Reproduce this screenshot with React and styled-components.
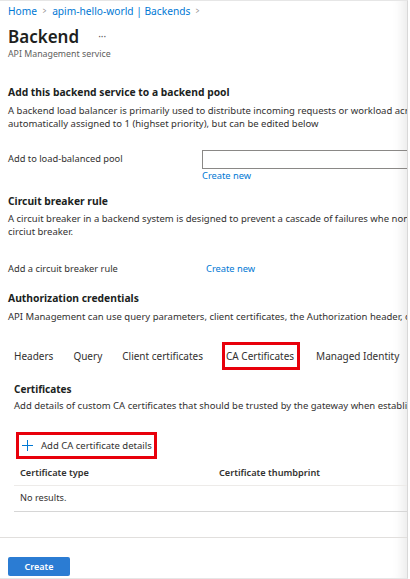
import React from "react";
import styled, { createGlobalStyle } from "styled-components";

const Global = createGlobalStyle`
  html, body {
    margin: 0;
    padding: 0;
    background: #ffffff;
  }
  body {
    font-family: "Noto Sans", "Open Sans", sans-serif;
    color: #323130;
  }
`;

const tabs = ["Headers", "Query", "Client certificates", "CA Certificates", "Managed Identity"];

const App = () => {
  return (
    <Page>
      <Global />
      <Main>
        <Breadcrumb>
          <Crumb>Home</Crumb>
          <Chevron>&gt;</Chevron>
          <Crumb>apim-hello-world | Backends</Crumb>
          <Chevron>&gt;</Chevron>
        </Breadcrumb>
        <TitleRow>
          <Title>Backend</Title>
          <More>···</More>
        </TitleRow>
        <Subtitle>API Management service</Subtitle>

        <Heading top={25}>Add this backend service to a backend pool</Heading>
        <Desc top={5}>
          A backend load balancer is primarily used to distribute incoming requests or workload across
          <br />
          automatically assigned to 1 (highset priority), but can be edited below
        </Desc>
        <FieldRow top={20}>
          <Label>Add to load-balanced pool</Label>
          <FieldCol>
            <Input />
            <Link>Create new</Link>
          </FieldCol>
        </FieldRow>

        <Heading top={11}>Circuit breaker rule</Heading>
        <Desc top={4}>
          A circuit breaker in a backend system is designed to prevent a cascade of failures whe non
          <br />
          circiut breaker.
        </Desc>
        <FieldRow top={22}>
          <Label>Add a circuit breaker rule</Label>
          <LinkInline>Create new</LinkInline>
        </FieldRow>

        <Heading top={13}>Authorization credentials</Heading>
        <Desc top={5}>
          API Management can use query parameters, client certificates, the Authorization header, or
        </Desc>

        <TabBar>
          {tabs.map((t) => (
            <Tab key={t} active={t === "CA Certificates"}>
              {t}
            </Tab>
          ))}
        </TabBar>

        <TabBody>
          <SubHeading>Certificates</SubHeading>
          <Desc top={3}>
            Add details of custom CA certificates that should be trusted by the gateway when establishing
          </Desc>
          <AddButton>
            <svg width="11" height="11" viewBox="0 0 11 11">
              <path d="M5.5 0v11M0 5.5h11" stroke="#0078d4" strokeWidth="1" fill="none" />
            </svg>
            Add CA certificate details
          </AddButton>
          <Table>
            <HeadRow>
              <Cell width={199}>Certificate type</Cell>
              <Cell>Certificate thumbprint</Cell>
            </HeadRow>
            <BodyRow>
              <Cell>No results.</Cell>
            </BodyRow>
          </Table>
        </TabBody>
      </Main>
      <Footer>
        <PrimaryButton>Create</PrimaryButton>
      </Footer>
    </Page>
  );
};

export default App;

const Page = styled.div`
  width: 407px;
  height: 577px;
  border-top: 1px solid #e6e6e6;
  border-right: 1px solid #d8d8d8;
  border-bottom: 1px solid #e6e6e6;
  overflow: hidden;
  display: flex;
  flex-direction: column;
  box-shadow: inset -14px 0 12px -10px rgba(0, 0, 0, 0.09);
  white-space: nowrap;
`;
const Main = styled.div`
  padding: 2px 0 0 8px;
  flex: 1;
`;
const Breadcrumb = styled.div`
  display: flex;
  align-items: center;
  gap: 5px;
  font-size: 10.2px;
  height: 15px;
`;
const Crumb = styled.span`
  color: #0078d4;
`;
const Chevron = styled.span`
  color: #8a8886;
  font-size: 9px;
  transform: scaleX(0.7);
`;
const TitleRow = styled.div`
  display: flex;
  align-items: center;
  margin-top: 6px;
  height: 24px;
`;
const Title = styled.div`
  font-size: 17px;
  font-weight: 600;
  color: #201f1e;
`;
const More = styled.div`
  margin-left: 19px;
  font-size: 10px;
  color: #605e5c;
`;
const Subtitle = styled.div`
  font-size: 8.8px;
  color: #605e5c;
`;
const Heading = styled.div`
  margin-top: ${(p) => p.top}px;
  font-size: 10.3px;
  font-weight: 700;
  color: #201f1e;
  line-height: 14px;
`;
const Desc = styled.div`
  margin-top: ${(p) => p.top}px;
  font-size: 9.5px;
  line-height: 13px;
  color: #323130;
`;
const FieldRow = styled.div`
  display: flex;
  margin-top: ${(p) => p.top}px;
`;
const Label = styled.div`
  width: 194px;
  font-size: 9.3px;
  line-height: 18px;
`;
const FieldCol = styled.div`
  display: flex;
  flex-direction: column;
  flex: 1;
`;
const Input = styled.div`
  height: 17px;
  border: 1px solid #8a8886;
  border-right: none;
`;
const Link = styled.div`
  font-size: 9.3px;
  line-height: 14px;
  color: #0078d4;
`;
const LinkInline = styled.div`
  margin-left: 4px;
  font-size: 9.3px;
  line-height: 18px;
  color: #0078d4;
`;
const TabBar = styled.div`
  display: flex;
  align-items: center;
  margin-top: 19px;
  padding-left: 2px;
`;
const Tab = styled.div`
  font-size: 10px;
  line-height: 14px;
  color: #323130;
  padding: ${(p) => (p.active ? "4px 3px 4px 1px" : "4px 1px")};
  margin-right: 12px;
  margin-left: ${(p) => (p.active ? "3px" : "0")};
  border: 3px solid ${(p) => (p.active ? "#e8000b" : "transparent")};
`;
const TabBody = styled.div`
  padding-left: 6px;
`;
const SubHeading = styled.div`
  margin-top: 12px;
  font-size: 10px;
  line-height: 14px;
  font-weight: 700;
  color: #201f1e;
`;
const AddButton = styled.div`
  display: inline-flex;
  align-items: center;
  gap: 8px;
  margin-top: 20px;
  margin-left: 2px;
  height: 21px;
  padding: 0 2px 0 3px;
  border: 3px solid #e8000b;
  font-size: 9.5px;
  color: #323130;
`;
const Table = styled.div`
  margin-top: 0px;
`;
const HeadRow = styled.div`
  display: flex;
  height: 26px;
  align-items: center;
  padding-left: 6px;
  border-bottom: 1px solid #edebe9;
  font-weight: 600;
  font-size: 9.2px;
`;
const BodyRow = styled.div`
  display: flex;
  height: 26px;
  align-items: center;
  padding-left: 6px;
  padding-bottom: 2px;
  box-sizing: border-box;
  border-bottom: 1px solid #d6d6d6;
  font-size: 9.2px;
`;
const Cell = styled.div`
  width: ${(p) => (p.width ? `${p.width}px` : "auto")};
`;
const Footer = styled.div`
  border-top: 1px solid #e1dfdd;
  padding: 15px 0 0 8px;
  height: 25px;
`;
const PrimaryButton = styled.button`
  width: 62px;
  height: 19px;
  border: none;
  border-radius: 2px;
  background: #2b7cd3;
  color: #ffffff;
  font-family: inherit;
  font-size: 9px;
  font-weight: 600;
  padding: 0;
`;
